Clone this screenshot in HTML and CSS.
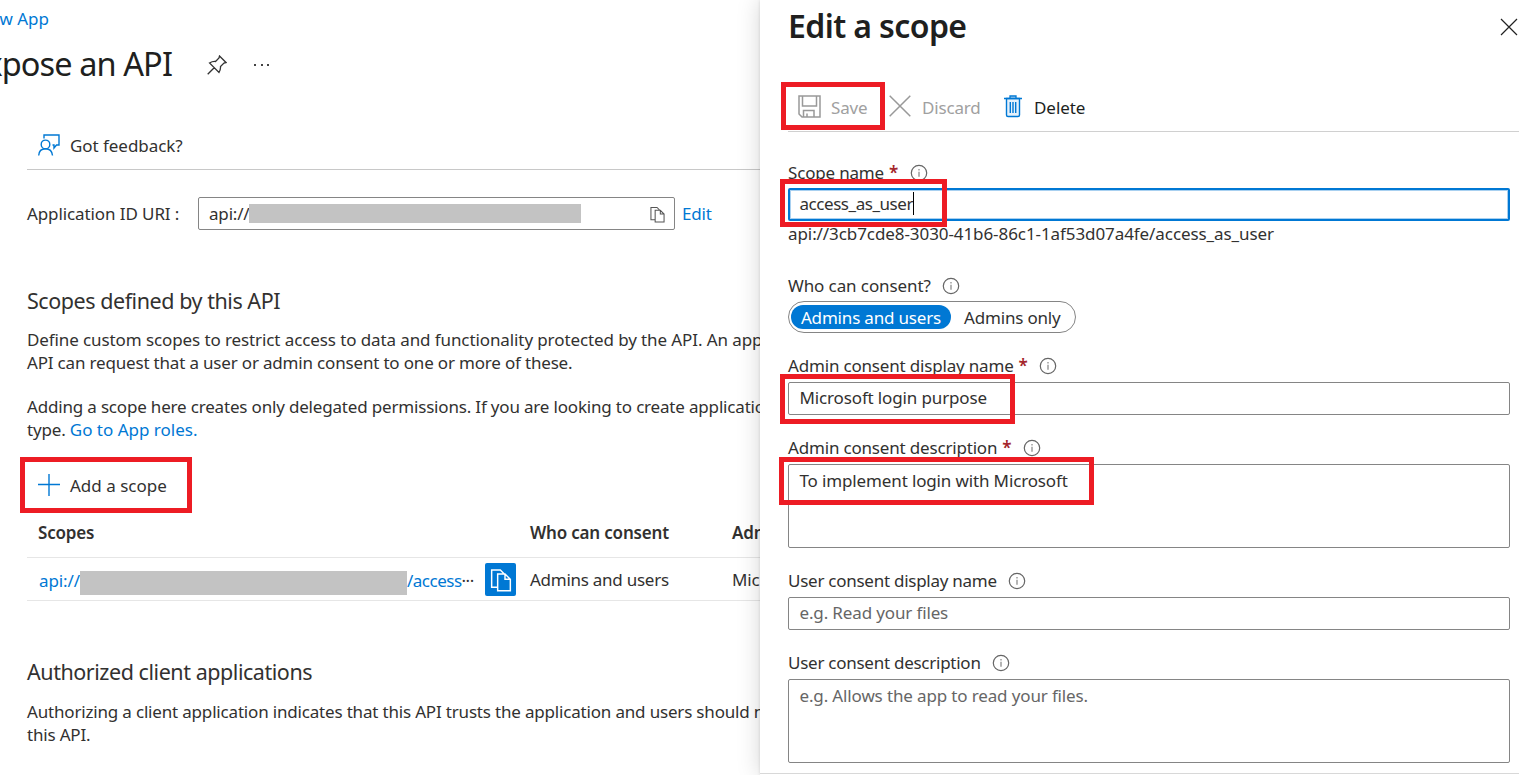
FILE: index.html
```html
<!DOCTYPE html>
<html lang="en">
<head>
<meta charset="utf-8">
<title>Expose an API</title>
<link rel="stylesheet" href="styles.css">
</head>
<body>
<svg class="defs" width="0" height="0">
  <symbol id="info" viewBox="0 0 18 18"><circle cx="9" cy="9" r="7.7" fill="none" stroke="#666" stroke-width="1.2"/><path d="M9 7.7v5.1M9 5v1.5" stroke="#777" stroke-width="1.1"/></symbol>
  <symbol id="copy" viewBox="0 0 16 18"><path d="M5.500 14.500H1V1.500H7.500L11 5M5.500 4.500H11L15 8.500V17H5.500ZM11 4.500V8.500H15" fill="none" stroke="currentColor" stroke-width="1.100"/></symbol>
</svg>
<div class="screen">
  <main class="page">
    <div class="crumb"><a>w App</a></div>
    <header class="title-row">
      <h1>xpose an API</h1>
      <svg class="pin" width="20" height="20" viewBox="0 0 20 20"><path d="M12.500 1L19 7.500L17 8L13.500 11.500Q13.800 14.500 12 17.500L2.500 8Q5.500 6.200 8.500 6.500L12 3ZM7.200 12.800L.7 19.300" fill="none" stroke="#333" stroke-width="1.3"/></svg>
      <span class="dots"><i></i><i></i><i></i></span>
    </header>
    <div class="feedback">
      <svg width="22" height="22" viewBox="0 0 22 22"><path d="M6 4.500V1H21V11H18.500L16 14V11H14.500M.700 21.500C1 16.500 4 14.800 7.500 14.800S14 16.500 14.500 21.500" fill="none" stroke="#0078d4" stroke-width="1.4"/><circle cx="7.500" cy="10.400" r="4.300" fill="none" stroke="#0078d4" stroke-width="1.4"/></svg>
      <span>Got feedback?</span>
    </div>
    <div class="appid">
      <span class="appid-label">Application ID URI :</span>
      <div class="appid-box"><span>api://</span><b class="redact"></b><svg class="copy" width="15" height="17"><use href="#copy"/></svg></div>
      <a>Edit</a>
    </div>
    <h2 class="h-scopes">Scopes defined by this API</h2>
    <p class="p-one"><span class="first">Define custom scopes to restrict access to data and functionality protected by the API. An app</span><br>API can request that a user or admin consent to one or more of these.</p>
    <p class="p-two">Adding a scope here creates only delegated permissions. If you are looking to create applicatio<br>type. <a>Go to App roles.</a></p>
    <div class="add"><svg width="22" height="22" viewBox="0 0 22 22"><path d="M11 0V22M0 10.500H22" stroke="#0078d4" stroke-width="1.4"/></svg><span>Add a scope</span></div>
    <div class="grid head"><span class="c1">Scopes</span><span class="c2">Who can consent</span><span>Adm</span></div>
    <div class="grid row"><span class="c1 link"><span>api://</span><b class="redact"></b><span class="tail">/access<span class="more">···</span></span><span class="copybtn"><svg width="22" height="24"><use href="#copy"/></svg></span></span><span class="c2">Admins and users</span><span>Mic</span></div>
    <h2 class="h-auth">Authorized client applications</h2>
    <p class="p-three">Authorizing a client application indicates that this API trusts the application and users should n<br>this API.</p>
  </main>
  <aside class="panel">
    <header class="panel-head"><h1>Edit a scope</h1><svg width="18" height="18" viewBox="0 0 18 18"><path d="M1 1L17 17M17 1L1 17" stroke="#222" stroke-width="1.2"/></svg></header>
    <div class="toolbar">
      <span class="tool off save"><svg width="23" height="23" viewBox="0 0 23 23"><path d="M1 1H22V22H4L1 19ZM4.500 1V11H18.500V1M5.500 22V15.500H16V22M9 22V18.500" fill="none" stroke="#999" stroke-width="1.5"/></svg><span>Save</span></span>
      <span class="tool off discard"><svg width="22" height="22" viewBox="0 0 22 22"><path d="M.700 .700L21.300 21.300M21.300 .700L.700 21.300" stroke="#999" stroke-width="1.5"/></svg><span>Discard</span></span>
      <span class="tool delete"><svg width="18" height="23" viewBox="0 0 18 23"><path d="M6 3V1H12V3" fill="#cfe4f7" stroke="#0078d4" stroke-width="1.3"/><path d="M2.500 3.500H15.500V20Q15.500 21.500 14 21.500H4Q2.500 21.500 2.500 20Z" fill="#e5f1fb" stroke="#0078d4" stroke-width="1.4"/><path d="M0 3.500H18M6.300 7V18M9 7V18M11.700 7V18" stroke="#0078d4" stroke-width="1.4"/></svg><span>Delete</span></span>
    </div>
    <div class="label l1"><span>Scope name</span><em>*</em><svg width="18" height="18"><use href="#info"/></svg></div>
    <div class="input focus"><span>access_as_user</span><i class="caret"></i></div>
    <div class="uri">api://3cb7cde8-3030-41b6-86c1-1af53d07a4fe/access_as_user</div>
    <div class="label l2"><span>Who can consent?</span><svg width="18" height="18"><use href="#info"/></svg></div>
    <div class="toggle"><span class="on">Admins and users</span><span class="opt">Admins only</span></div>
    <div class="label field"><span>Admin consent display name</span><em>*</em><svg width="18" height="18"><use href="#info"/></svg></div>
    <div class="input">Microsoft login purpose</div>
    <div class="label field"><span>Admin consent description</span><em>*</em><svg width="18" height="18"><use href="#info"/></svg></div>
    <div class="input area">To implement login with Microsoft</div>
    <div class="label field user"><span>User consent display name</span><svg width="18" height="18"><use href="#info"/></svg></div>
    <div class="input hint">e.g. Read your files</div>
    <div class="label field user"><span>User consent description</span><svg width="18" height="18"><use href="#info"/></svg></div>
    <div class="input area hint">e.g. Allows the app to read your files.</div>
    <div class="panel-foot"></div>
  </aside>
  <div class="mark m-add"></div>
  <div class="mark m-save"></div>
  <div class="mark m-name"></div>
  <div class="mark m-display"></div>
  <div class="mark m-desc"></div>
</div>
</body>
</html>
```
FILE: styles.css
```css
* { box-sizing: border-box; }
body { margin: 0; background: #fff; color: #323130; font-family: "Noto Sans", "Open Sans", sans-serif; font-size: 17px; line-height: 23px; letter-spacing: -0.18px; overflow: hidden; }
h1, h2, p { margin: 0; font-weight: 400; }
a, .link { color: #0078d4; }
svg { display: block; flex: none; }
.defs { position: absolute; }
.screen { position: relative; display: flex; width: 1519px; height: 775px; overflow: hidden; }
.page { width: 760px; height: 775px; padding: 7px 0 0 27px; overflow: hidden; white-space: nowrap; flex: none; }
.page > * { width: 733px; }
.crumb { height: 23px; display: flex; }
.crumb a { width: 22px; display: flex; justify-content: flex-end; letter-spacing: 0; }
.title-row { display: flex; align-items: center; height: 44px; margin-top: 13px; }
.title-row h1 { width: 145px; display: flex; justify-content: flex-end; font-size: 32.5px; line-height: 42px; padding-bottom: 2px; letter-spacing: -0.9px; color: #201f1e; flex: none; }
.pin { margin-left: 35px; }
.dots { display: flex; gap: 4.500px; margin-left: 27px; }
.dots i { width: 2px; height: 2px; background: #444; }
.feedback { display: flex; align-items: center; gap: 10px; height: 49px; margin-top: 34px; padding-left: 11px; border-bottom: 1px solid #c8c8c8; letter-spacing: -0.05px; }
.appid { display: flex; align-items: center; height: 33px; margin-top: 27px; }
.appid-label { width: 171px; letter-spacing: -0.1px; }
.appid-box { display: flex; align-items: center; width: 477px; height: 33px; border: 1px solid #858585; border-radius: 2px; padding: 0 9px 0 10px; margin-right: 7px; }
.redact { display: block; background: #c3c3c3; flex: none; }
.appid-box span { width: 40px; }
.appid-box .redact { width: 332px; height: 19px; }
.copy { margin-left: auto; color: #555; margin-top: 2px; }
.h-scopes, .h-auth { font-size: 21.500px; line-height: 30px; letter-spacing: -0.45px; }
.h-scopes { margin-top: 56px; }
.p-one { margin-top: 12px; }
.p-one .first { letter-spacing: -0.1px; }
.p-two { margin-top: 21px; }
.p-two a { letter-spacing: 0; }
.add { display: flex; align-items: center; gap: 10px; height: 30px; margin-top: 29px; padding-left: 11px; letter-spacing: 0; }
.grid { display: flex; align-items: center; padding-left: 11px; border-bottom: 1px solid #e6e6e6; }
.head { height: 50px; margin-top: 8px; font-weight: 600; }
.row { height: 43px; padding-top: 1px; }
.c1 { width: 492px; flex: none; display: flex; align-items: center; }
.c2 { width: 202px; flex: none; }
.row .c2 { letter-spacing: -0.26px; }
.row .c1 > span:first-child { width: 42px; padding: 2px 0 0 1px; letter-spacing: -0.1px; }
.row .redact { width: 327px; height: 24px; margin-top: 7px; }
.tail { width: 78px; padding-top: 2px; letter-spacing: -0.5px; }
.more { color: #323130; }
.copybtn { display: grid; place-items: center; width: 31px; height: 33px; background: #0078d4; color: #fff; border-radius: 2px; }
.h-auth { margin-top: 56px; }
.p-three { margin-top: 13px; }

.panel { position: relative; width: 759px; height: 775px; padding: 0 9px 0 28px; background: #fff; box-shadow: 0 0 22px rgba(0,0,0,.17), 0 0 3px rgba(0,0,0,.12); flex: none; }
.panel-head { display: flex; align-items: center; height: 54px; margin-right: -8px; justify-content: space-between; }
.panel-head h1 { font-size: 32px; font-weight: 600; letter-spacing: -0.6px; line-height: 44px; color: #201f1e; padding-bottom: 2px; }
.toolbar { display: flex; align-items: center; height: 50px; margin-top: 28px; margin-right: -9px; border-bottom: 1px solid #d0d0d0; padding-left: 10px; }
.tool { display: flex; align-items: center; gap: 11px; }
.tool span { padding-top: 1px; }
.off { color: #a0a0a0; }
.tool svg { margin-bottom: 1px; }
.save { width: 91px; gap: 10px; }
.discard { width: 115px; }
.delete { gap: 12px; letter-spacing: -0.05px; color: #201f1e; }
.label { display: flex; align-items: center; height: 24px; }
.label span, .label em { padding-bottom: 2px; }
.label em { color: #a4262c; font-style: normal; font-weight: 600; margin-left: 5px; }
.label svg { margin-left: 11.500px; }
.l1 { margin-top: 29px; }
.input { display: flex; height: 33px; border: 1px solid #858585; border-radius: 2px; padding: 3px 10.500px; letter-spacing: -0.14px; }
.focus { border: 2px solid #0078d4; padding: 2px 9.500px; margin-top: 3px; box-shadow: inset 0 0 0 1px #a8d0f0; letter-spacing: -0.45px; }
.area { height: 84px; padding-top: 4px; }
.hint { color: #666; }
.caret { width: 1px; height: 23px; background: #000; }
.uri { height: 24px; margin-top: 1px; letter-spacing: -0.08px; }
.l2 { margin-top: 28px; letter-spacing: -0.1px; }
.l2 svg { margin-left: 11px; }
.toggle { display: flex; align-items: center; width: 288px; height: 32px; margin-top: 3px; padding: 0 2px; border: 1px solid #858585; border-radius: 16px; }
.on { width: 160px; height: 24px; line-height: 25px; text-align: center; border-radius: 12px; background: #0078d4; color: #fff; }
.opt { margin-left: 13px; }
.field { margin: 21px 0 4px; }
.user { letter-spacing: -0.26px; }
.panel-foot { height: 2px; margin: 10px -9px 0 -28px; border-top: 1px solid #d8d8d8; }
.mark { position: absolute; border: 5px solid #ed1c24; }
.m-add { left: 20px; top: 457px; width: 172px; height: 56px; }
.m-save { left: 781px; top: 82px; width: 104px; height: 48px; }
.m-name { left: 780px; top: 179px; width: 167px; height: 48px; }
.m-display { left: 780px; top: 374px; width: 235px; height: 50px; }
.m-desc { left: 779px; top: 457px; width: 315px; height: 48px; }
```
